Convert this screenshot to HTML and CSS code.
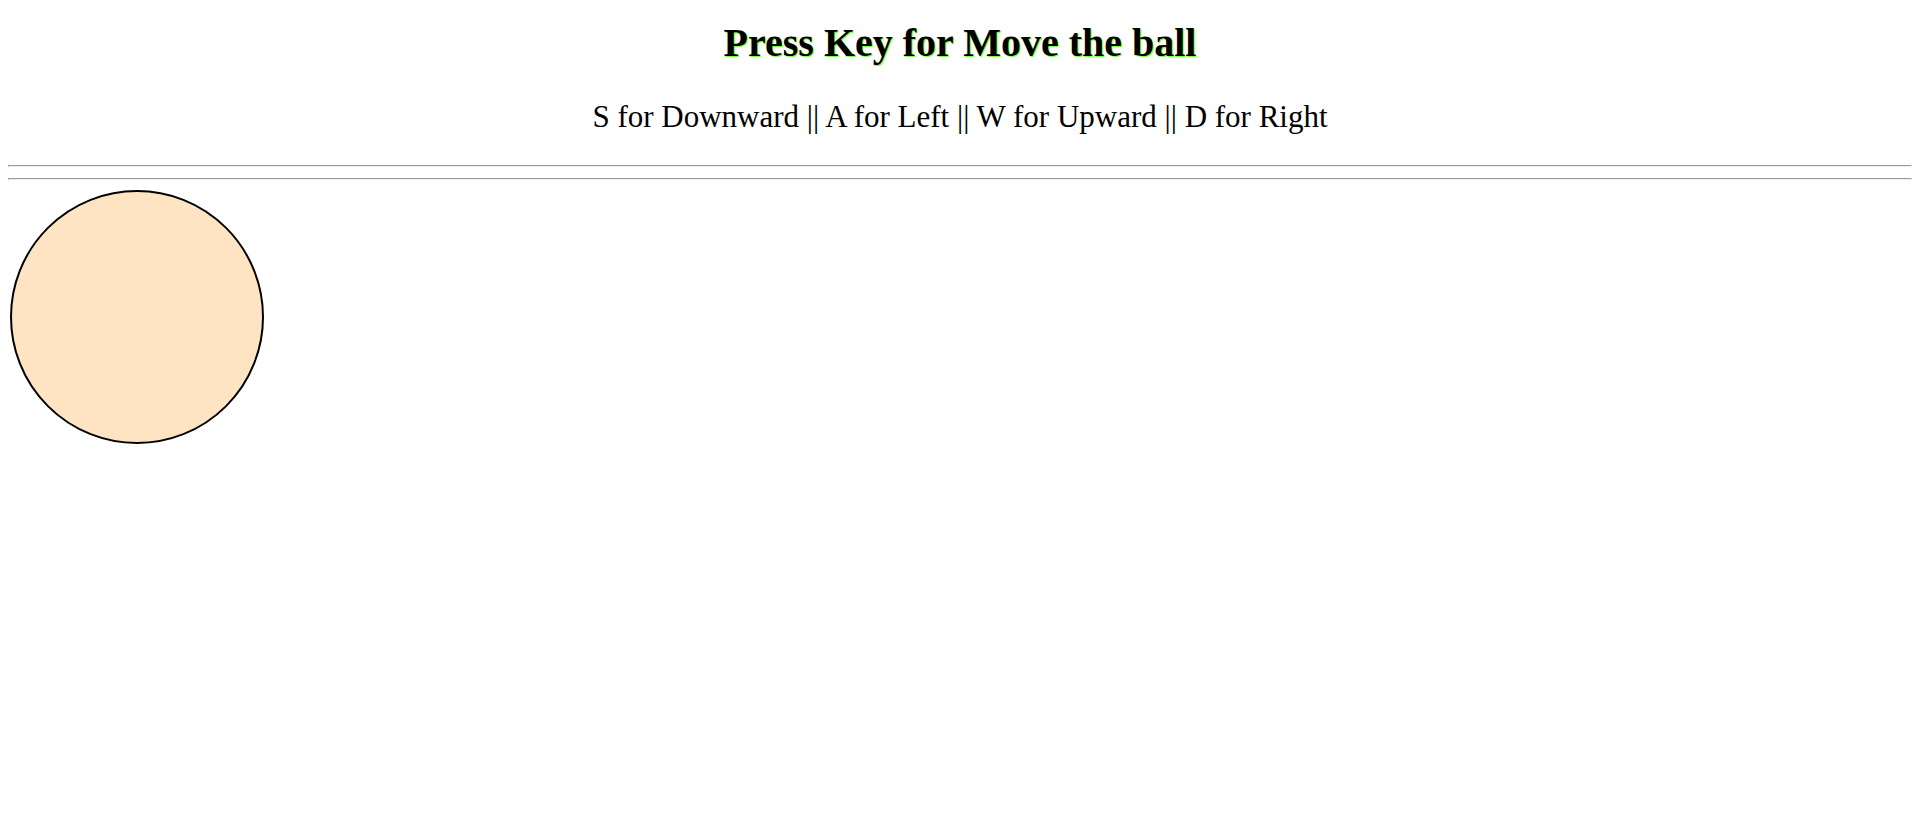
FILE: index.html
```html
<!DOCTYPE html>
<html>
<head>
<meta charset="utf-8">
<title>Move the ball</title>
<link rel="stylesheet" href="styles.css">
</head>
<body>
<h1 class="title">Press Key for Move the ball</h1>
<p class="keys">S for Downward || A for Left || W for Upward || D for Right</p>
<hr class="rule">
<hr class="rule rule-second">
<div class="ball"></div>
</body>
</html>
```
FILE: styles.css
```css
body {
  margin: 0;
  padding: 8px;
  font-family: "Liberation Serif", "Times New Roman", serif;
  color: #000;
  background: #fff;
}
.title {
  text-align: center;
  font-size: 40px;
  font-weight: bold;
  margin: 11px 0 33px;
  text-shadow: 1px 1px 1px #66ff33;
}
.keys {
  text-align: center;
  font-size: 31px;
  margin: 0 0 30px;
}
.rule {
  margin: 0;
  border-style: inset;
  border-width: 1px;
  color: gray;
}
.rule-second {
  margin-top: 11px;
}
.ball {
  width: 250px;
  height: 250px;
  margin: 10px 0 0 2px;
  border: 2px solid #000;
  border-radius: 50%;
  background: bisque;
}
```
